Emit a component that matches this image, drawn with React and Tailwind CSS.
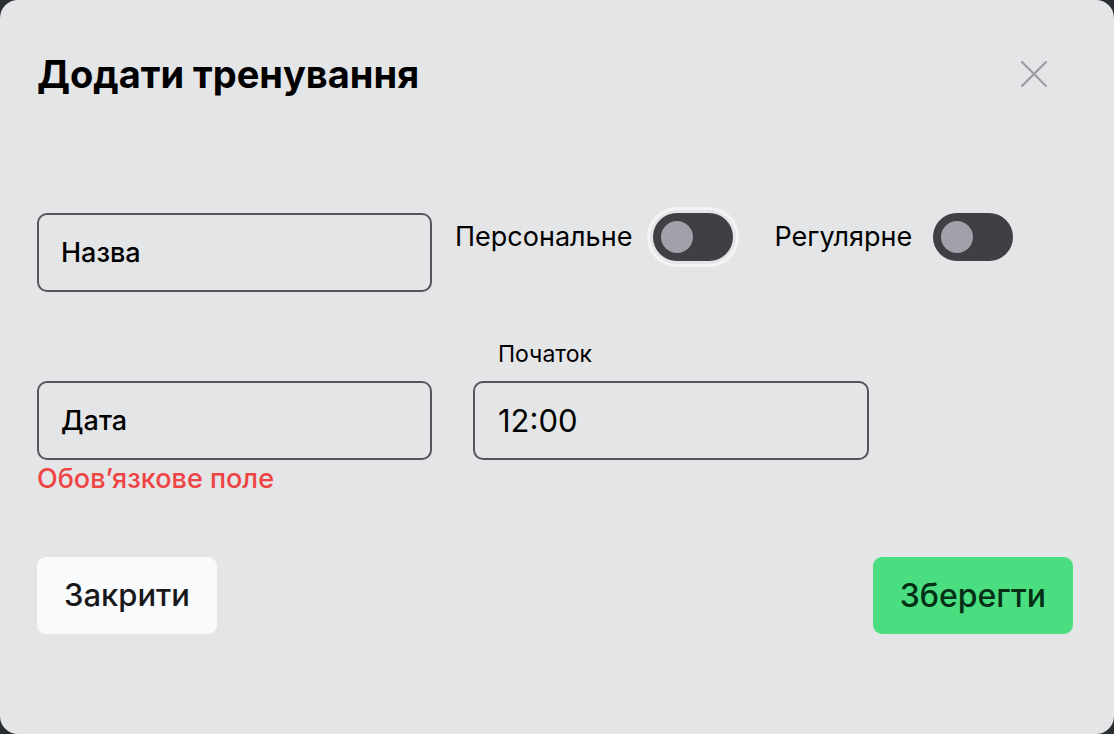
import React, { useState } from 'react';

const Toggle = ({ checked, onChange, focused }) => (
  <button
    type="button"
    onClick={() => onChange(!checked)}
    className={`flex h-[48px] w-[80px] shrink-0 items-center rounded-full bg-[#3f3f46] px-[8px] ${
      focused ? 'ring-[3px] ring-[#f4f4f5] ring-offset-[3px] ring-offset-[#e4e5e7]' : ''
    }`}
  >
    <span
      className={`h-[32px] w-[32px] rounded-full bg-[#a1a1aa] transition-transform ${
        checked ? 'translate-x-[32px]' : ''
      }`}
    />
  </button>
);

const App = () => {
  const [personal, setPersonal] = useState(false);
  const [regular, setRegular] = useState(false);

  return (
    <div className="h-screen w-full bg-[#2a2d33] font-['Inter','Noto_Sans',sans-serif] text-black">
      <div className="flex h-full w-full flex-col rounded-[18px] bg-[#e4e5e7] pl-[37px] pr-[41px]">
        {/* Header */}
        <div className="flex items-center justify-between pt-[50px]">
          <h2 className="text-[38px] font-bold leading-[48px]">Додати тренування</h2>
          <button type="button" className="mr-[15px] flex h-[48px] w-[48px] items-center justify-center text-[#9d9ea4]">
            <svg width="26" height="26" viewBox="0 0 26 26" fill="none" stroke="currentColor" strokeWidth="2.2" strokeLinecap="round">
              <path d="M1 1L25 25M25 1L1 25" />
            </svg>
          </button>
        </div>

        {/* Row 1 */}
        <div className="mt-[115px] flex items-start">
          <input
            placeholder="Назва"
            className="h-[79px] w-[395px] rounded-[10px] border-2 border-[#55565c] bg-transparent px-[22px] text-[27px] font-medium outline-none placeholder:text-black"
          />
          <div className="ml-[23px] flex h-[48px] items-center gap-[21px]">
            <span className="text-[27px]">Персональне</span>
            <Toggle checked={personal} onChange={setPersonal} focused />
          </div>
          <div className="ml-[41px] flex h-[48px] items-center gap-[21px]">
            <span className="text-[27px]">Регулярне</span>
            <Toggle checked={regular} onChange={setRegular} />
          </div>
        </div>

        {/* Row 2 */}
        <div className="mt-[48px] flex items-start gap-[41px]">
          <div className="flex flex-col pt-[41px]">
            <input
              placeholder="Дата"
              className="h-[79px] w-[395px] rounded-[10px] border-2 border-[#55565c] bg-transparent px-[22px] text-[27px] font-medium outline-none placeholder:text-black"
            />
            <span className="mt-[5px] text-[27px] font-medium leading-[28px] text-[#ef4444]">Обов’язкове поле</span>
          </div>
          <div className="flex flex-col">
            <label className="pl-[25px] text-[23px] leading-[28px]">Початок</label>
            <input
              defaultValue="12:00"
              className="mt-[13px] h-[79px] w-[396px] rounded-[10px] border-2 border-[#55565c] bg-transparent px-[23px] text-[31px] outline-none"
            />
          </div>
        </div>

        {/* Footer */}
        <div className="mt-[64px] flex items-center justify-between">
          <button type="button" className="h-[77px] rounded-[9px] bg-[#f9fafb] px-[27px] text-[31px] font-medium text-[#18181b]">
            Закрити
          </button>
          <button type="button" className="h-[77px] rounded-[9px] bg-[#4ade80] px-[27px] text-[32px] font-medium text-[#052e16]">
            Зберегти
          </button>
        </div>
      </div>
    </div>
  );
};

export default App;
